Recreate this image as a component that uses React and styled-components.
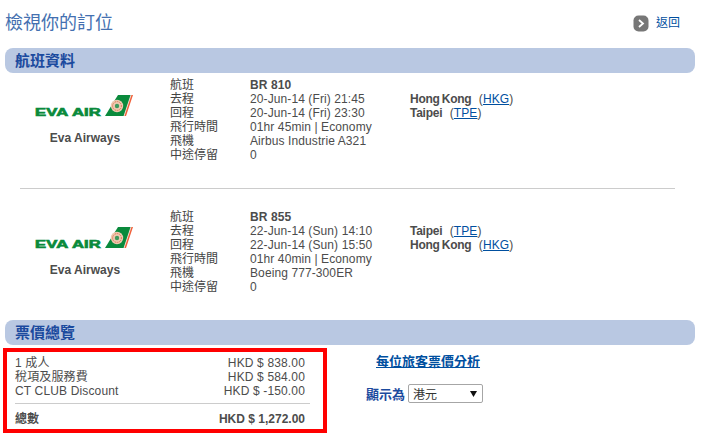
import React from 'react';
import styled, { createGlobalStyle } from 'styled-components';

const Global = createGlobalStyle`
  html, body { margin: 0; padding: 0; background: #fff; }
  body { font-family: Arial, "Liberation Sans", "Noto Sans CJK TC", sans-serif; font-size: 12px; color: #4c4c4c; }
`;
const Page = styled.div`width: 701px; height: 437px; overflow: hidden; padding: 0 6px 0 5px; box-sizing: border-box;`;
const Header = styled.header`display: flex; justify-content: space-between; align-items: center; height: 48px; padding: 0 15px 2px 0; box-sizing: border-box;`;
const Title = styled.h1`margin: 0; font-size: 18px; font-weight: normal; color: #4470b0; line-height: 22px;`;
const Back = styled.a`display: flex; align-items: center; gap: 7px; color: #004f9f; font-size: 12px; line-height: 16px;`;
const BackIcon = styled.svg`width: 16px; height: 17px; display: block;`;
const SectionBar = styled.h2`margin: 0; height: 25px; line-height: 25px; background: #b9c8e2; border-radius: 8px; padding-left: 10px; font-size: 15px; font-weight: bold; color: #1b4a9e;`;
const Flight = styled.section`display: grid; grid-template-columns: 165px 80px 160px 1fr; grid-auto-rows: 14px; line-height: 14px; letter-spacing: .1px; padding-top: ${p => p.$top}px;`;
const Brand = styled.div`grid-row: 1 / span 6; display: flex; flex-direction: column; align-items: center; padding-top: 16px; width: 160px;`;
const AirlineName = styled.div`font-weight: bold; margin-top: 13px; letter-spacing: 0; color: #4c4c4c;`;
const Label = styled.div`grid-column: 2; color: #444; letter-spacing: 0;`;
const Value = styled.div`grid-column: 3; white-space: nowrap; font-weight: ${p => p.$bold ? 'bold' : 'normal'};`;
const Place = styled.div`grid-column: 4; white-space: nowrap;`;
const PlaceName = styled.b`margin-right: 4px; word-spacing: -1px; letter-spacing: -.25px;`;
const CodeLink = styled.a`color: #004f9f; text-decoration: underline;`;
const Divider = styled.hr`margin: 26px 20px 21px 15px; border: 0; border-top: 1px solid #ccc; height: 0;`;
const PriceBar = styled(SectionBar)`margin-top: 26px;`;
const Summary = styled.div`display: flex; align-items: flex-start; margin-left: -2px; margin-top: 3px;`;
const PriceBox = styled.div`width: 324px; height: 85px; box-sizing: border-box; border: 4px solid #f00; padding: 4px 13px 0 8px; letter-spacing: .15px;`;
const PriceRow = styled.div`display: flex; justify-content: space-between; line-height: 14px; padding-right: 5px; ${p => p.$total && 'font-weight: bold; margin-top: 8px; letter-spacing: 0;'}`;
const PriceLine = styled.hr`margin: 5px 0 0; border: 0; border-top: 1px solid #ccc; height: 0;`;
const Currency = styled.div`flex: 1; display: flex; flex-direction: column; align-items: flex-start; padding: 7px 0 0 39px;`;
const Breakdown = styled.a`margin-left: 10px; font-size: 13px; line-height: 14px; font-weight: bold; color: #004f9f; text-decoration: underline;`;
const CurrencyRow = styled.div`display: flex; align-items: center; gap: 3px; margin-top: 15px;`;
const CurrencyLabel = styled.span`font-size: 13px; font-weight: bold; color: #1b4a9e;`;
const Select = styled.div`width: 75px; height: 19px; box-sizing: border-box; border: 1px solid #a6a6a6; border-radius: 2px; display: flex; align-items: center; justify-content: space-between; padding: 0 5px 0 4px; color: #333; font-size: 12px;`;
const Caret = styled.svg`width: 7px; height: 7px;`;

function Logo() {
  return (
    <svg width="100" height="24" viewBox="0 0 100 24" style={{ display: 'block' }}>
      <text x="0" y="21.5" fontFamily="Liberation Sans, Arial, sans-serif" fontWeight="bold" fontSize="11.5" fill="#0a8a3c" textLength="66" lengthAdjust="spacingAndGlyphs" stroke="#0a8a3c" strokeWidth=".7">EVA{'\u2009'}AIR</text>
      <polygon points="70,22 83,1 96,1 89,22" fill="#0a8a3c" />
      <polygon points="96,1 98,1 91,22 89,22" fill="#f0603a" />
      <polygon points="95.5,1 96.5,1 89.5,22 88.5,22" fill="#fff" opacity=".7" />
      <circle cx="82" cy="12" r="6.2" fill="#eec9b0" />
      <circle cx="82" cy="12" r="4.4" fill="none" stroke="#d9633f" strokeWidth="1" strokeDasharray="1 1" />
      <circle cx="82" cy="12" r="2.2" fill="#3f9a5c" />
    </svg>
  );
}
function FlightBlock({ top, no, dep, arr, dur, plane, from, fromCode, to, toCode }) {
  return (
    <Flight $top={top}>
      <Brand><Logo /><AirlineName>Eva Airways</AirlineName></Brand>
      <Label>航班</Label><Value $bold>{no}</Value><Place />
      <Label>去程</Label><Value>{dep}</Value><Place><PlaceName>{from}</PlaceName> (<CodeLink>{fromCode}</CodeLink>)</Place>
      <Label>回程</Label><Value>{arr}</Value><Place><PlaceName>{to}</PlaceName> (<CodeLink>{toCode}</CodeLink>)</Place>
      <Label>飛行時間</Label><Value>{dur}</Value><Place />
      <Label>飛機</Label><Value>{plane}</Value><Place />
      <Label>中途停留</Label><Value>0</Value><Place />
    </Flight>
  );
}
export default function App() {
  return (
    <Page>
      <Global />
      <Header>
        <Title>檢視你的訂位</Title>
        <Back>
          <BackIcon viewBox="0 0 16 17"><rect x=".5" y=".5" width="15" height="16" rx="5" fill="#777" /><path d="M6 5l4 3.5L6 12" fill="none" stroke="#fff" strokeWidth="1.8" /></BackIcon>
          返回
        </Back>
      </Header>
      <SectionBar>航班資料</SectionBar>
      <FlightBlock top={5} no="BR 810" dep="20-Jun-14 (Fri) 21:45" arr="20-Jun-14 (Fri) 23:30" dur="01hr 45min | Economy" plane="Airbus Industrie A321" from="Hong Kong" fromCode="HKG" to="Taipei" toCode="TPE" />
      <Divider />
      <FlightBlock top={0} no="BR 855" dep="22-Jun-14 (Sun) 14:10" arr="22-Jun-14 (Sun) 15:50" dur="01hr 40min | Economy" plane="Boeing 777-300ER" from="Taipei" fromCode="TPE" to="Hong Kong" toCode="HKG" />
      <PriceBar>票價總覽</PriceBar>
      <Summary>
        <PriceBox>
          <PriceRow><span>1 成人</span><span>HKD $ 838.00</span></PriceRow>
          <PriceRow><span>稅項及服務費</span><span>HKD $ 584.00</span></PriceRow>
          <PriceRow><span>CT CLUB Discount</span><span>HKD $ -150.00</span></PriceRow>
          <PriceLine />
          <PriceRow $total><span>總數</span><span>HKD $ 1,272.00</span></PriceRow>
        </PriceBox>
        <Currency>
          <Breakdown>每位旅客票價分析</Breakdown>
          <CurrencyRow>
            <CurrencyLabel>顯示為</CurrencyLabel>
            <Select>港元<Caret viewBox="0 0 7 7"><polygon points="0,1 7,1 3.5,7" fill="#111" /></Caret></Select>
          </CurrencyRow>
        </Currency>
      </Summary>
    </Page>
  );
}
